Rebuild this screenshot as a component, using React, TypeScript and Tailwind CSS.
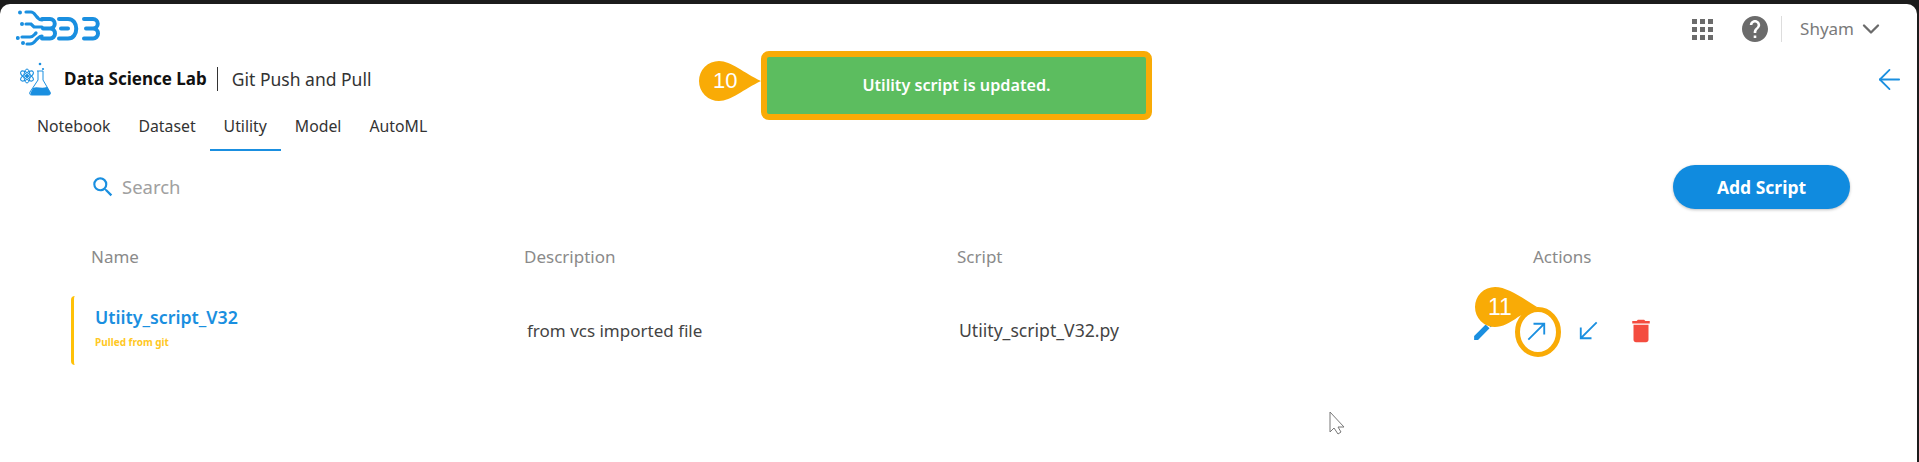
import { ArrowLeft, ChevronDown } from "lucide-react";

const tabs = ["Notebook", "Dataset", "Utility", "Model", "AutoML"];

function BdbLogo() {
  return (
    <svg width="86" height="38" viewBox="0 0 86 38" fill="none" stroke="#1a8fe0" strokeWidth="4" strokeLinecap="round">
      <g fill="#1a8fe0" stroke="none">
        <circle cx="4" cy="2.5" r="2" />
        <circle cx="6" cy="14" r="2" />
        <circle cx="1.8" cy="28" r="2" />
        <circle cx="7" cy="33" r="2" />
      </g>
      <g strokeWidth="3.2">
        <path d="M10 2h5c3 0 4 3 6 5s2 3 5 3" />
        <path d="M10 14h5l3 3h8" />
        <path d="M6 27h8c3 0 4-2 6-4" />
        <path d="M11 34h3c4 0 5-3 7-5s3-3 5-3" />
      </g>
      <path d="M26 9h8a4.500 4.500 0 0 1 0 9.500h-7M27 18.500h7a5 5 0 0 1 0 10h-8" />
      <path d="M43 9h9c11 0 11 19.500 0 19.500h-9M45 18.500h7" />
      <path d="M68 9h9a4.500 4.500 0 0 1 0 9.500h-7M70 18.500h7a5 5 0 0 1 0 10h-9" />
    </svg>
  );
}

function FlaskIcon() {
  return (
    <svg width="34" height="34" viewBox="0 0 34 34" fill="none" stroke="#1a8fe0" strokeWidth="1">
      <ellipse cx="9" cy="14" rx="7.500" ry="3" transform="rotate(35 9 14)" />
      <ellipse cx="9" cy="14" rx="7.500" ry="3" transform="rotate(-35 9 14)" />
      <ellipse cx="9" cy="14" rx="3" ry="7" />
      <circle cx="9" cy="14" r="1.500" fill="#1a8fe0" />
      <circle cx="22" cy="2" r="1.300" fill="#1a8fe0" stroke="none" />
      <circle cx="25" cy="7" r="1.100" fill="#1a8fe0" stroke="none" />
      <path d="M19 9h6M20 9v9l-8 12c-1 2 0 3 2 3h16c2 0 3-1 2-3l-7-12V9" />
      <path d="M15 26c4-2 8 1 14-1l3 5c1 2 0 3-2 3H14c-2 0-2-1-1-3z" fill="#1a8fe0" stroke="none" />
    </svg>
  );
}

function Header() {
  return (
    <div className="flex h-[54px] items-start justify-between">
      <div className="pl-4 pt-[6px]">
        <BdbLogo />
      </div>
      <div className="flex items-center pr-[32px] pt-[11px] text-[#7a7a7a]">
        <svg width="21" height="21" viewBox="0 0 21 21" fill="#6b6b6b">
          <rect x="0" y="0" width="5" height="5" />
          <rect x="8" y="0" width="5" height="5" />
          <rect x="16" y="0" width="5" height="5" />
          <rect x="0" y="8" width="5" height="5" />
          <rect x="8" y="8" width="5" height="5" />
          <rect x="16" y="8" width="5" height="5" />
          <rect x="0" y="16" width="5" height="5" />
          <rect x="8" y="16" width="5" height="5" />
          <rect x="16" y="16" width="5" height="5" />
        </svg>
        <svg className="ml-[29px]" width="26" height="26" viewBox="2 2 20 20" fill="#6b6b6b">
          <path d="M12 2C6.480 2 2 6.480 2 12s4.480 10 10 10 10-4.480 10-10S17.520 2 12 2zm1 17h-2v-2h2v2zm2.070-7.750-.9.920C13.450 12.900 13 13.500 13 15h-2v-.5c0-1.100.45-2.100 1.170-2.830l1.240-1.260c.37-.36.59-.86.59-1.410 0-1.100-.9-2-2-2s-2 .9-2 2H8c0-2.210 1.790-4 4-4s4 1.790 4 4c0 .88-.36 1.680-.93 2.250z" />
        </svg>
        <div className="ml-[13px] h-[26px] w-px bg-[#dddddd]" />
        <span className="ml-[18px] text-[17px]">Shyam</span>
        <ChevronDown className="ml-[3px] h-7 w-7 text-[#6b6b6b]" strokeWidth={2} />
      </div>
    </div>
  );
}

function Breadcrumb() {
  return (
    <div className="flex h-[42px] items-center justify-between pl-[18px] pr-[11px]">
      <div className="flex items-center">
        <FlaskIcon />
        <span className="ml-[12px] text-[17px] font-bold text-[#111111]">Data Science Lab</span>
        <div className="ml-[10px] h-6 w-px bg-[#333333]" />
        <span className="ml-[14px] text-[17.5px] text-[#333333]">Git Push and Pull</span>
      </div>
      <ArrowLeft className="h-[33px] w-[33px] text-[#1a8fe0]" strokeWidth={1.3} />
    </div>
  );
}

function Tabs() {
  return (
    <div className="flex h-[51px] pl-[23px] text-[15.8px] text-[#333333]">
      {tabs.map((tab) => (
        <div
          key={tab}
          className={`flex items-center px-[14px] pt-[5px] ${tab === "Utility" ? "border-b-2 border-[#1a8fe0]" : "border-b-2 border-transparent"}`}
        >
          {tab}
        </div>
      ))}
    </div>
  );
}

function Toolbar() {
  return (
    <div className="mt-[14px] flex h-[44px] items-center justify-between pl-[90px] pr-[67px]">
      <div className="flex items-center text-[18.5px] text-[#a0a0a0]">
        <svg width="26" height="26" viewBox="0 0 24 24" fill="#1a8fe0">
          <path d="M15.500 14h-.79l-.28-.27A6.470 6.470 0 0 0 16 9.500 6.500 6.500 0 1 0 9.500 16c1.610 0 3.090-.59 4.230-1.570l.27.28v.79l5 4.990L20.490 19l-4.990-5zm-6 0C7.010 14 5 11.990 5 9.500S7.010 5 9.500 5 14 7.010 14 9.500 11.990 14 9.500 14z" />
        </svg>
        <span className="ml-[6px]">Search</span>
      </div>
      <button type="button" className="h-[44px] w-[177px] rounded-full bg-[#108bdf] text-[17.5px] font-bold text-white shadow-[0_1px_3px_rgba(0,0,0,0.25)]">
        Add Script
      </button>
    </div>
  );
}

function ScriptRow() {
  return (
    <div className="ml-[71px] mt-[27px] flex h-[69px] items-center rounded-l-sm border-l-[3px] border-[#ffc107]">
      <div className="w-[453px] pb-[7px] pl-[21px]">
        <div className="text-[17.8px] font-semibold text-[#1a8fe0]">Utiity_script_V32</div>
        <div className="mt-[5px] text-[10px] font-bold text-[#ffc824]">Pulled from git</div>
      </div>
      <div className="w-[432px] text-[17px] text-[#444444]">from vcs imported file</div>
      <div className="w-[512px] text-[17.6px] text-[#444444]">Utiity_script_V32.py</div>
      <div className="flex items-center">
        <svg width="25" height="25" viewBox="0 0 24 24" fill="#1a8fe0">
          <path d="M3 17.250V21h3.750L17.810 9.940l-3.750-3.750L3 17.250zM20.710 7.040a1 1 0 0 0 0-1.410l-2.340-2.340a1 1 0 0 0-1.410 0l-1.830 1.830 3.750 3.750 1.830-1.830z" />
        </svg>
        <svg className="ml-[27px]" width="28" height="28" viewBox="0 0 24 24" fill="#1a8fe0">
          <path d="M9 5v1.600h7.200L4 18.900 5.100 20 17.400 7.800V15H19V5H9z" />
        </svg>
        <svg className="ml-[23px]" width="28" height="28" viewBox="0 0 24 24" fill="#1a8fe0">
          <path d="M15 19v-1.600H7.800L20 5.100 18.900 4 6.600 16.200V9H5v10h10z" />
        </svg>
        <svg className="ml-[24px]" width="30" height="30" viewBox="0 0 24 24" fill="#f44c3f">
          <path d="M6 19c0 1.100.9 2 2 2h8c1.100 0 2-.9 2-2V7H6v12zM19 4h-3.500l-1-1h-5l-1 1H5v2h14V4z" />
        </svg>
      </div>
    </div>
  );
}

export default function App() {
  return (
    <div className="relative h-[462px] w-[1919px] overflow-hidden bg-[#1c1c1c] pr-[2px] pt-[4px] font-['Noto_Sans',sans-serif]">
      <div className="h-full rounded-t-[10px] bg-white">
        <Header />
        <Breadcrumb />
        <Tabs />
        <Toolbar />
        <div className="mt-[36px] flex h-[24px] items-center pl-[91px] text-[17px] text-[#8a8a8a]">
          <div className="w-[433px]">Name</div>
          <div className="w-[433px]">Description</div>
          <div className="w-[576px]">Script</div>
          <div>Actions</div>
        </div>
        <ScriptRow />
      </div>

      {/* annotation overlays */}
      <div className="absolute left-[761px] top-[51px] flex h-[69px] w-[391px] items-center justify-center rounded-[8px] border-[6px] border-[#f9ab06] bg-[#5cbd5f] text-[16.2px] font-semibold text-white">
        Utility script is updated.
      </div>
      <div className="absolute left-[699px] top-[61px] h-[40px] w-[63px]">
        <svg width="63" height="40" viewBox="0 0 63 40" className="absolute inset-0">
          <path d="M20 0C32 0 45 12 62 20 45 28 32 40 20 40A20 20 0 0 1 20 0z" fill="#f9ab06" />
        </svg>
        <span className="absolute left-[14px] top-[6px] font-['Liberation_Sans',sans-serif] text-[22px] leading-[28px] text-white">10</span>
      </div>
      <div className="absolute left-[1474px] top-[287px] h-[70px] w-[90px]">
        <svg width="90" height="70" viewBox="0 0 90 70" className="absolute inset-0">
          <path d="M21 0C34 0 50 12 63 20L44 30C36 36 28 40 21 40A20 20 0 0 1 21 0z" fill="#f9ab06" />
          <ellipse cx="64" cy="45" rx="20.500" ry="22.500" fill="none" stroke="#f9ab06" strokeWidth="5" />
        </svg>
        <span className="absolute left-[14px] top-[6px] font-['Liberation_Sans',sans-serif] text-[23px] leading-[28px] text-white">11</span>
      </div>
      <svg className="absolute left-[1329px] top-[411px]" width="18" height="25" viewBox="0 0 18 25" fill="#ffffff" stroke="#777777" strokeWidth="1">
        <path d="M1 1v20l4-4 4 6 3-2-3-5h6z" />
      </svg>
    </div>
  );
}
